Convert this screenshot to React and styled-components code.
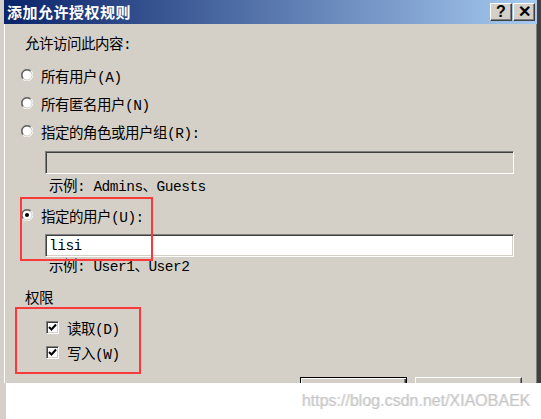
import React from "react"
import styled, { createGlobalStyle } from "styled-components"

const GlobalStyle = createGlobalStyle`
  body {
    margin: 0;
    background: #fff;
  }
`

const Frame = styled.div`
  position: relative;
  box-sizing: border-box;
  width: 541px;
  height: 383px;
  overflow: hidden;
  background: #d4d0c8;
  border-left: 4px solid #d4d0c8;
  border-right: 4px solid #404040;
  box-shadow: inset 1px 0 0 #fff, inset -1px 0 0 #808080;
  font-family: "Liberation Mono", "Noto Sans CJK SC", monospace;
  font-size: 14.5px;
  letter-spacing: -0.5px;
  color: #000;
`

const TitleBar = styled.div`
  display: flex;
  align-items: center;
  height: 24px;
  padding: 0 2px 0 3px;
  background: linear-gradient(to right, #0a246a, #a6caf0);
`

const Title = styled.div`
  flex: 1;
  font-family: "Noto Sans CJK SC", sans-serif;
  font-weight: 700;
  font-size: 15px;
  letter-spacing: 0.5px;
  color: #fff;
  line-height: 24px;
`

const CaptionButtons = styled.div`
  display: flex;
  gap: 1px;
`

const CaptionButton = styled.div`
  box-sizing: border-box;
  width: 22px;
  height: 18px;
  display: flex;
  align-items: center;
  justify-content: center;
  background: #d4d0c8;
  border-top: 1px solid #fff;
  border-left: 1px solid #fff;
  border-right: 1px solid #404040;
  border-bottom: 1px solid #404040;
  box-shadow: inset -1px -1px 0 #808080;
  font-family: "Liberation Sans", sans-serif;
  font-weight: 700;
  font-size: 16px;
  letter-spacing: 0;
  line-height: 1;
`

const Body = styled.div`
  padding: 7px 0 0 17px;
`

const Caption = styled.div`
  height: 28px;
  line-height: 28px;
  padding-left: 4px;
`

const OptionRow = styled.label`
  display: flex;
  align-items: center;
  gap: 8px;
  height: 28px;
  margin-top: ${p => p.$top || 0}px;
`

const Field = styled.div`
  box-sizing: border-box;
  width: 469px;
  height: 23px;
  margin: ${p => p.$top}px 0 0 24px;
  padding: 0 3px;
  display: flex;
  align-items: center;
  background: ${p => (p.$disabled ? "#d4d0c8" : "#fff")};
  border-top: 1px solid #808080;
  border-left: 1px solid #808080;
  border-right: 1px solid #fff;
  border-bottom: 1px solid #fff;
  box-shadow: inset 1px 1px 0 #404040, inset -1px -1px 0 #d4d0c8;
`

const Hint = styled.div`
  height: 20px;
  line-height: 20px;
  margin-top: ${p => p.$top || 0}px;
  padding-left: 28px;
`

const Section = styled.div`
  height: 20px;
  line-height: 20px;
  margin-top: 12px;
  padding-left: 4px;
`

const CheckRow = styled.label`
  display: flex;
  align-items: center;
  gap: 8px;
  height: 25px;
  padding-left: 25px;
  margin-top: ${p => p.$top || 0}px;
`

const CheckBox = styled.span`
  box-sizing: border-box;
  width: 13px;
  height: 13px;
  display: flex;
  align-items: center;
  justify-content: center;
  background: #fff;
  border-top: 1px solid #808080;
  border-left: 1px solid #808080;
  border-right: 1px solid #fff;
  border-bottom: 1px solid #fff;
  box-shadow: inset 1px 1px 0 #404040, inset -1px -1px 0 #d4d0c8;
`

const ButtonRow = styled.div`
  display: flex;
  justify-content: flex-end;
  gap: 8px;
  margin-top: 12px;
  padding-right: 15px;
`

const Button = styled.div`
  box-sizing: border-box;
  width: 107px;
  height: 23px;
  background: #d4d0c8;
  border: 1px solid ${p => (p.$default ? "#000" : "#404040")};
  border-top-color: ${p => (p.$default ? "#000" : "#fff")};
  border-left-color: ${p => (p.$default ? "#000" : "#fff")};
  box-shadow: ${p =>
    p.$default
      ? "inset 1px 1px 0 #fff, inset -1px -1px 0 #404040, inset -2px -2px 0 #808080"
      : "inset -1px -1px 0 #808080"};
`

const Mark = styled.div`
  position: absolute;
  left: ${p => p.$x}px;
  top: ${p => p.$y}px;
  width: ${p => p.$w}px;
  height: ${p => p.$h}px;
  box-sizing: border-box;
  border: 2px solid #fa3a3a;
  pointer-events: none;
`

const Footer = styled.div`
  box-sizing: border-box;
  height: 36px;
  display: flex;
  align-items: center;
  justify-content: flex-end;
  padding-right: 11px;
  background: #fff;
  border-left: 6px solid #d4d0c8;
  font-family: "Liberation Sans", sans-serif;
  font-size: 16px;
  color: rgba(170, 170, 170, 0.5);
  text-shadow: 1px 0 0 rgba(190, 190, 190, 0.5);
`

const Radio = ({ checked }) => (
  <svg width="12" height="12" viewBox="0 0 12 12">
    <circle cx="6" cy="6" r="5" fill="#fff" />
    <path d="M1.76 10.24 A6 6 0 0 1 10.24 1.76" fill="none" stroke="#808080" strokeWidth="1" />
    <path d="M2.46 9.54 A5 5 0 0 1 9.54 2.46" fill="none" stroke="#404040" strokeWidth="1" />
    <path d="M10.24 1.76 A6 6 0 0 1 1.76 10.24" fill="none" stroke="#fff" strokeWidth="1" />
    <path d="M9.54 2.46 A5 5 0 0 1 2.46 9.54" fill="none" stroke="#d4d0c8" strokeWidth="1" />
    {checked && <circle cx="6" cy="6" r="2" fill="#000" />}
  </svg>
)

const Tick = () => (
  <svg width="9" height="9" viewBox="0 0 9 9">
    <path d="M1 4 L3.5 6.5 L8 1.5" fill="none" stroke="#000" strokeWidth="2" />
  </svg>
)

export default function App() {
  return (
    <>
      <GlobalStyle />
      <Frame>
        <TitleBar>
          <Title>添加允许授权规则</Title>
          <CaptionButtons>
            <CaptionButton>?</CaptionButton>
            <CaptionButton>✕</CaptionButton>
          </CaptionButtons>
        </TitleBar>

        <Body>
          <Caption>允许访问此内容:</Caption>
          <OptionRow $top={2}>
            <Radio />
            所有用户(A)
          </OptionRow>
          <OptionRow>
            <Radio />
            所有匿名用户(N)
          </OptionRow>
          <OptionRow>
            <Radio />
            指定的角色或用户组(R):
          </OptionRow>
          <Field $top={6} $disabled />
          <Hint $top={3}>示例: Admins、Guests</Hint>
          <OptionRow $top={4}>
            <Radio checked />
            指定的用户(U):
          </OptionRow>
          <Field $top={5}>lisi</Field>
          <Hint>示例: User1、User2</Hint>

          <Section>权限</Section>
          <CheckRow $top={6}>
            <CheckBox><Tick /></CheckBox>
            读取(D)
          </CheckRow>
          <CheckRow>
            <CheckBox><Tick /></CheckBox>
            写入(W)
          </CheckRow>

          {/* OK / Cancel, only their top edges show above the footer */}
          <ButtonRow>
            <Button $default />
            <Button />
          </ButtonRow>
        </Body>

        <Mark $x={16} $y={197} $w={133} $h={64} />
        <Mark $x={11} $y={307} $w={126} $h={67} />
      </Frame>
      <Footer>https://blog.csdn.net/XIAOBAEK</Footer>
    </>
  )
}
